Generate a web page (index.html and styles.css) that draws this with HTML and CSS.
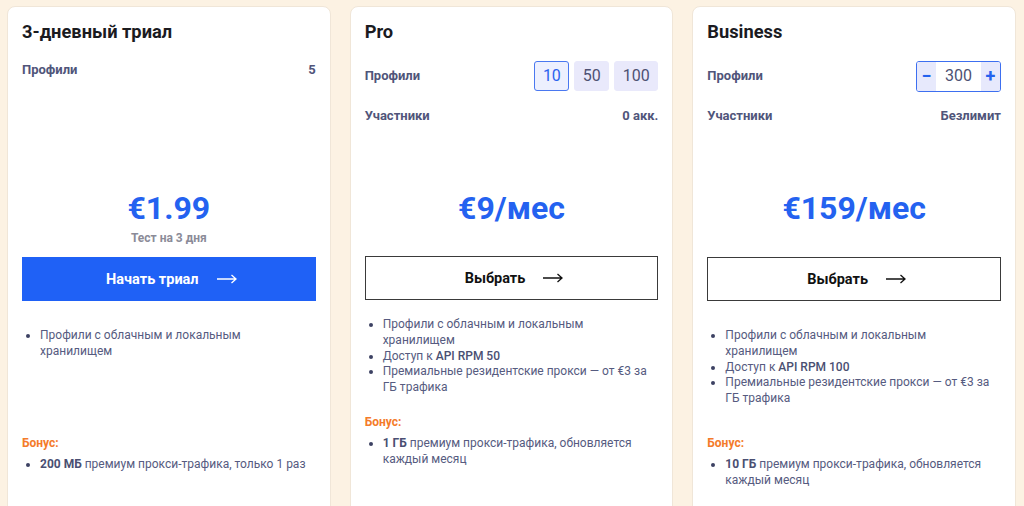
FILE: index.html
```html
<!DOCTYPE html>
<html lang="ru">
<head>
<meta charset="utf-8">
<title>Тарифы</title>
<link rel="stylesheet" href="styles.css">
</head>
<body>
<div class="plans">
  <section class="card">
    <h2 class="title">3-дневный триал</h2>
    <div class="specs">
      <div class="row"><span class="label">Профили</span><span class="value">5</span></div>
    </div>
    <div class="price">€1.99</div>
    <div class="sub">Тест на 3 дня</div>
    <button class="btn btn-primary">Начать триал <svg class="arrow" viewBox="0 0 20 10" width="20" height="10"><path d="M0 5H19M14.5 1L19 5L14.5 9"/></svg></button>
    <div class="features">
      <ul class="list">
        <li>Профили с облачным и локальным хранилищем</li>
      </ul>
    </div>
    <div class="bonus-label">Бонус:</div>
    <ul class="list bonus-list">
      <li><b>200 МБ</b> премиум прокси-трафика, только 1 раз</li>
    </ul>
  </section>

  <section class="card card-compact">
    <h2 class="title">Pro</h2>
    <div class="specs">
      <div class="row row-tall"><span class="label">Профили</span>
        <div class="toggles">
          <span class="toggle active">10</span>
          <span class="toggle">50</span>
          <span class="toggle">100</span>
        </div>
      </div>
      <div class="row"><span class="label">Участники</span><span class="value">0 акк.</span></div>
    </div>
    <div class="price">€9/мес</div>
    <div class="sub"></div>
    <button class="btn btn-outline">Выбрать <svg class="arrow" viewBox="0 0 20 10" width="20" height="10"><path d="M0 5H19M14.5 1L19 5L14.5 9"/></svg></button>
    <div class="features">
      <ul class="list">
        <li>Профили с облачным и локальным хранилищем</li>
        <li>Доступ к <b class="semi">API RPM 50</b></li>
        <li>Премиальные резидентские прокси — от €3 за ГБ трафика</li>
      </ul>
    </div>
    <div class="bonus-label">Бонус:</div>
    <ul class="list bonus-list">
      <li><b>1 ГБ</b> премиум прокси-трафика, обновляется каждый месяц</li>
    </ul>
  </section>

  <section class="card">
    <h2 class="title">Business</h2>
    <div class="specs">
      <div class="row row-tall"><span class="label">Профили</span>
        <div class="stepper">
          <span class="step">&minus;</span>
          <span class="step-value">300</span>
          <span class="step">+</span>
        </div>
      </div>
      <div class="row"><span class="label">Участники</span><span class="value">Безлимит</span></div>
    </div>
    <div class="price">€159/мес</div>
    <div class="sub"></div>
    <button class="btn btn-outline">Выбрать <svg class="arrow" viewBox="0 0 20 10" width="20" height="10"><path d="M0 5H19M14.5 1L19 5L14.5 9"/></svg></button>
    <div class="features">
      <ul class="list">
        <li>Профили с облачным и локальным хранилищем</li>
        <li>Доступ к <b class="semi">API RPM 100</b></li>
        <li>Премиальные резидентские прокси — от €3 за ГБ трафика</li>
      </ul>
    </div>
    <div class="bonus-label">Бонус:</div>
    <ul class="list bonus-list">
      <li><b>10 ГБ</b> премиум прокси-трафика, обновляется каждый месяц</li>
    </ul>
  </section>
</div>
</body>
</html>
```
FILE: styles.css
```css
* { box-sizing: border-box; }
html, body { margin: 0; padding: 0; }
body {
  background: #fcf2e3;
  font-family: Roboto, "Liberation Sans", Arial, sans-serif;
  overflow: hidden;
}
.plans {
  display: grid;
  grid-template-columns: repeat(3, 1fr);
  gap: 19px;
  padding: 6px 8px 0 7px;
}
.card {
  background: #fff;
  border: 1px solid #f0e6d8;
  border-radius: 8px;
  padding: 14px 14px 0 14px;
  min-height: 540px;
  display: flex;
  flex-direction: column;
}
.title {
  margin: 0;
  font-size: 18.3px;
  line-height: 22px;
  font-weight: 700;
  color: #1b1b1f;
}
.specs {
  margin-top: 18px;
  height: 128px;
  display: flex;
  flex-direction: column;
  gap: 16px;
}
.row {
  display: flex;
  justify-content: space-between;
  align-items: center;
  line-height: 18px;
}
.row-tall { height: 30px; }
.label, .value {
  font-size: 13px;
  font-weight: 700;
  color: #50557a;
}
.toggles { display: flex; gap: 5px; }
.toggle {
  height: 30px;
  padding: 0 7.5px;
  display: flex;
  align-items: center;
  justify-content: center;
  background: #e9e9fb;
  border: 1px solid #e9e9fb;
  border-radius: 3px;
  font-size: 16px;
  color: #4d5173;
}
.toggle.active {
  background: #edf0fe;
  border-color: #4a78f0;
  color: #2a62ee;
}
.stepper {
  width: 85px;
  height: 31px;
  border: 1px solid #3d6ff0;
  border-radius: 3px;
  display: flex;
  align-items: stretch;
  overflow: hidden;
}
.step {
  width: 19px;
  background: #e7e9fc;
  color: #2462ee;
  font-size: 18px;
  font-weight: 700;
  display: flex;
  align-items: center;
  justify-content: center;
}
.step-value {
  flex: 1;
  display: flex;
  align-items: center;
  justify-content: center;
  font-size: 16px;
  color: #4d5173;
}
.price {
  text-align: center;
  font-size: 32px;
  line-height: 38px;
  font-weight: 700;
  color: #2462f0;
}
.sub {
  margin-top: 3px;
  min-height: 16px;
  text-align: center;
  font-size: 12px;
  line-height: 16px;
  font-weight: 700;
  color: #8b8b98;
}
.btn {
  margin-top: 11px;
  height: 44px;
  width: 100%;
  padding: 0 0 0 5px;
  display: flex;
  align-items: center;
  justify-content: center;
  gap: 18px;
  font-family: inherit;
  font-size: 14.5px;
  font-weight: 700;
  border-radius: 0;
  cursor: pointer;
}
.btn-primary {
  background: #1f61f6;
  border: 1px solid #1f61f6;
  color: #fff;
}
.btn-outline {
  background: #fff;
  border: 1.5px solid #3a3a3a;
  color: #111;
}
.arrow {
  fill: none;
  stroke: currentColor;
  stroke-width: 1.3;
}
.features {
  margin-top: 27px;
  min-height: 107px;
}
.card-compact .btn { margin-top: 10px; }
.card-compact .features {
  margin-top: 17px;
  min-height: 97px;
}
.list {
  margin: 0;
  padding: 0 2px 0 18px;
  font-size: 12px;
  line-height: 15.75px;
  color: #565b80;
}
.list li::marker { color: #3d4163; }
.list b { font-weight: 700; color: #4a4f72; }
.list b.semi { font-weight: 500; }
.bonus-label {
  font-size: 12px;
  line-height: 16px;
  font-weight: 700;
  color: #f47b2a;
}
.bonus-list { margin-top: 6px; }
```
